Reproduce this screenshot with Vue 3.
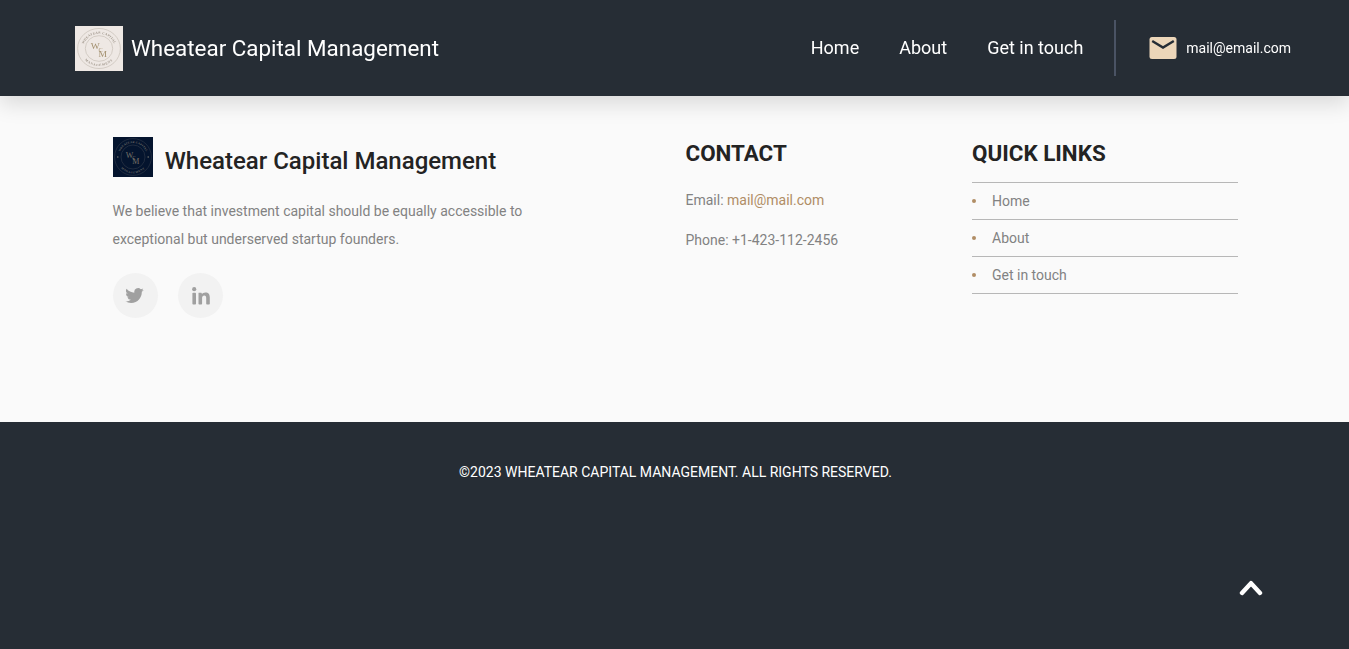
<script setup>
const nav = ['Home', 'About', 'Get in touch']
const logos = {
  light: { bg: '#eee8e4', ink: '#9c9388', ring: '#c4bcb4', mark: '#a3906f' },
  dark: { bg: '#04142e', ink: '#74736d', ring: '#2f3848', mark: '#777268' },
}
</script>

<template>
  <div class="page">
    <header class="header">
      <a class="brand">
        <svg class="brand-logo" viewBox="0 0 100 100" preserveAspectRatio="none">
          <rect width="100" height="100" :fill="logos.light.bg" />
          <g fill="none" :stroke="logos.light.ring" stroke-width="1.4">
            <circle cx="50" cy="50" r="44.5" />
            <circle cx="50" cy="50" r="28.5" />
          </g>
          <path id="arc-top-a" d="M17 50 A33 33 0 0 1 83 50" fill="none" />
          <path id="arc-low-a" d="M11 50 A39 39 0 0 0 89 50" fill="none" />
          <g class="ring" :fill="logos.light.ink">
            <text><textPath href="#arc-top-a" startOffset="50%" text-anchor="middle">WHEATEAR CAPITAL</textPath></text>
            <text class="wide"><textPath href="#arc-low-a" startOffset="50%" text-anchor="middle">MANAGEMENT</textPath></text>
          </g>
          <text class="mono" :fill="logos.light.mark"><tspan x="33" y="52">W</tspan><tspan class="small" x="49" y="57">C</tspan><tspan x="49" y="68">M</tspan></text>
        </svg>
        <span class="brand-name">Wheatear Capital Management</span>
      </a>
      <nav class="nav">
        <a v-for="item in nav" :key="item">{{ item }}</a>
      </nav>
      <a class="mail">
        <svg width="28" height="22" viewBox="0 0 28 22">
          <rect x=".5" y="0" width="27" height="22" rx="2.5" fill="#ecd6b9" />
          <path d="M3.2 4 L14 10.6 L24.8 4" fill="none" stroke="#262d35" stroke-width="2.4" />
        </svg>
        <span>mail@email.com</span>
      </a>
    </header>

    <main class="info">
      <section class="about">
        <div class="about-head">
          <svg class="about-logo" viewBox="0 0 100 100">
            <rect width="100" height="100" :fill="logos.dark.bg" />
            <g fill="none" :stroke="logos.dark.ring" stroke-width="1.6">
              <circle cx="50" cy="50" r="46" />
              <circle cx="50" cy="50" r="30" />
            </g>
            <path id="arc-top-b" d="M15 50 A35 35 0 0 1 85 50" fill="none" />
            <path id="arc-low-b" d="M9 50 A41 41 0 0 0 91 50" fill="none" />
            <g class="ring" :fill="logos.dark.ink">
              <text><textPath href="#arc-top-b" startOffset="50%" text-anchor="middle">WHEATEAR CAPITAL</textPath></text>
              <text class="wide"><textPath href="#arc-low-b" startOffset="50%" text-anchor="middle">MANAGEMENT</textPath></text>
              <circle cx="12" cy="50" r="2" /><circle cx="88" cy="50" r="2" />
            </g>
            <text class="mono" :fill="logos.dark.mark"><tspan x="32" y="52">W</tspan><tspan class="small" x="48" y="57">C</tspan><tspan x="48" y="67">M</tspan></text>
          </svg>
          <h2>Wheatear Capital Management</h2>
        </div>
        <p>We believe that investment capital should be equally accessible to exceptional but underserved startup founders.</p>
        <div class="social">
          <a>
            <svg class="bird" width="19" height="19" viewBox="0 0 24 24" fill="#a0a0a0">
              <path d="M23.6 4.9c-.85.38-1.77.63-2.73.75a4.77 4.77 0 0 0 2.09-2.63c-.92.54-1.94.94-3.02 1.15a4.76 4.76 0 0 0-8.1 4.34A13.5 13.5 0 0 1 2.03 3.54a4.76 4.76 0 0 0 1.47 6.35c-.78-.02-1.52-.24-2.16-.59v.06a4.76 4.76 0 0 0 3.81 4.66c-.7.19-1.43.22-2.15.08a4.76 4.76 0 0 0 4.44 3.3A9.54 9.54 0 0 1 .4 19.37a13.46 13.46 0 0 0 7.29 2.14c8.75 0 13.53-7.25 13.53-13.53l-.02-.62a9.66 9.66 0 0 0 2.4-2.46z" />
            </svg>
          </a>
          <a>
            <svg class="in" width="18" height="18" viewBox="0 0 18 18" fill="#a0a0a0">
              <circle cx="2.2" cy="2.2" r="2.1" />
              <rect x=".4" y="5.7" width="3.6" height="11.8" rx=".8" />
              <path d="M6.6 5.7h2.6q.6 0 .6.6v1c.7-1.2 1.9-1.9 3.6-1.9 3.2 0 4.4 1.9 4.4 5v6.3q0 .8-.8.8h-2q-.8 0-.8-.8v-5.6c0-1.7-.5-2.7-1.9-2.7s-2.2 1-2.2 2.7v5.6q0 .8-.8.8h-2q-.8 0-.8-.8V6.3q0-.6.1-.6z" />
            </svg>
          </a>
        </div>
      </section>

      <section class="contact">
        <h3>CONTACT</h3>
        <p>Email: <a>mail@mail.com</a></p>
        <p>Phone: +1-423-112-2456</p>
      </section>

      <section class="links">
        <h3>QUICK LINKS</h3>
        <ul>
          <li v-for="item in nav" :key="item">{{ item }}</li>
        </ul>
      </section>
    </main>

    <footer class="footer">
      <p>©2023 WHEATEAR CAPITAL MANAGEMENT. ALL RIGHTS RESERVED.</p>
      <a class="to-top">
        <svg width="24" height="18" viewBox="0 0 24 18">
          <path d="M3 14 L12 4.2 L21 14" fill="none" stroke="#fff" stroke-width="4.4" stroke-linecap="round" stroke-linejoin="round" />
        </svg>
      </a>
    </footer>
  </div>
</template>

<style>
body { margin: 0; background: #262d35; }
</style>

<style scoped>
.page {
  height: 649px;
  display: flex;
  flex-direction: column;
  overflow: hidden;
  font-family: Roboto, sans-serif;
  font-size: 14px;
  background: #fafafa;
}
h2, h3, p, ul { margin: 0; padding: 0; }
.header {
  position: relative;
  z-index: 1;
  box-sizing: border-box;
  height: 96px;
  flex: none;
  display: flex;
  align-items: center;
  padding: 0 58px 0 75px;
  background: #262d35;
  color: #fff;
  box-shadow: 0 8px 20px rgba(0, 0, 0, .13);
  will-change: transform;
}
.brand { display: flex; align-items: center; margin-right: auto; }
.brand-logo { width: 48px; height: 45px; margin-right: 8px; }
.brand-name { font-size: 22.4px; line-height: 30px; }
.ring { font: bold 7px "Liberation Serif", serif; letter-spacing: .6px; }
.wide { letter-spacing: 1.4px; }
.mono { font: 20px "Liberation Serif", serif; }
.small { font-size: 13px; }
.nav { display: flex; gap: 40px; font-size: 18px; line-height: 28px; }
.mail {
  display: flex;
  align-items: center;
  height: 56px;
  margin-left: 31px;
  padding-left: 33px;
  border-left: 2px solid #4a5364;
}
.mail svg { margin-right: 9px; }
.info {
  box-sizing: border-box;
  height: 326px;
  flex: none;
  display: grid;
  grid-template-columns: 573px 286.5px 266px;
  padding: 41px 0 0 112.5px;
  color: #828282;
}
.about-head { display: flex; height: 40px; }
.about-logo { width: 40px; height: 40px; margin-right: 12.2px; }
h2 { font-size: 24px; font-weight: 500; line-height: 48px; color: #232323; white-space: nowrap; }
.about p { width: 430px; margin-top: 20px; line-height: 28px; }
.social { display: flex; gap: 20px; margin-top: 20px; }
.social a {
  display: flex;
  align-items: center;
  justify-content: center;
  width: 45px;
  height: 45px;
  border-radius: 50%;
  background: #f2f2f2;
}
.bird { margin-right: 1px; }
.in { margin-left: 1px; }
h3 { font-size: 22.4px; font-weight: 700; line-height: 32px; color: #232323; }
.contact p { line-height: 28px; margin-top: 12px; }
.contact h3 + p { margin-top: 17px; }
.contact a { color: #b08d65; }
.links ul { margin-top: 13px; list-style: none; border-top: 1px solid #b7b7b7; }
.links li {
  display: flex;
  align-items: center;
  height: 36px;
  border-bottom: 1px solid #b7b7b7;
}
.links li::before {
  content: "";
  width: 4px;
  height: 4px;
  margin-right: 16px;
  border-radius: 50%;
  background: #b08d65;
}
.footer {
  position: relative;
  flex: 1;
  padding: 40px 0 0 2px;
  background: #262d35;
  color: #fff;
  text-align: center;
}
.footer p { line-height: 20px; }
.to-top { position: absolute; right: 86px; bottom: 52px; line-height: 0; }
</style>
